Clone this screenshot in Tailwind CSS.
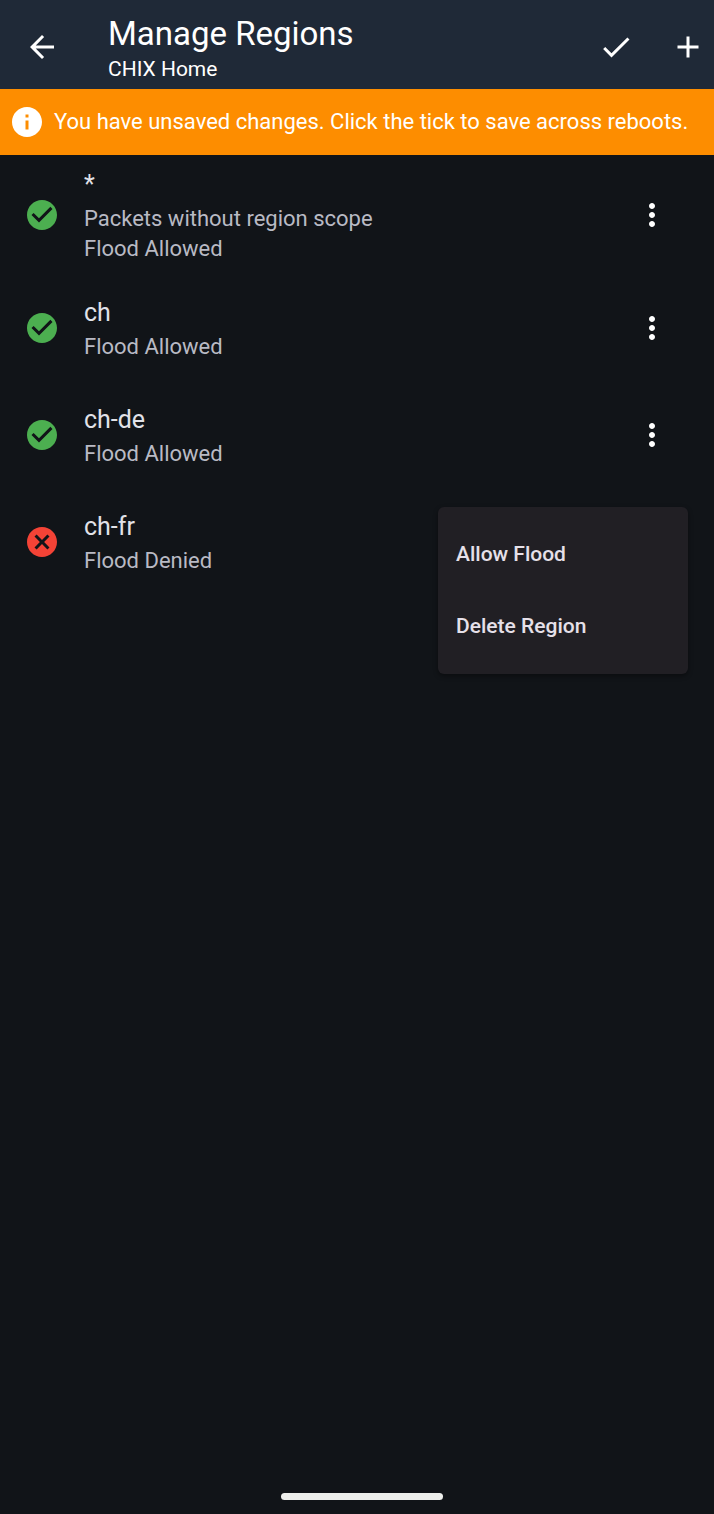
<!DOCTYPE html>
<html lang="en">
<head>
<meta charset="utf-8">
<meta name="viewport" content="width=device-width, initial-scale=1">
<title>Manage Regions</title>
<script src="https://cdn.jsdelivr.net/npm/@tailwindcss/browser@4"></script>
</head>
<body class="bg-[#111418] font-[Roboto,sans-serif] text-white">
<svg class="hidden" aria-hidden="true">
  <symbol id="ok" viewBox="0 0 24 24"><path d="M12 2C6.480 2 2 6.480 2 12s4.480 10 10 10 10-4.480 10-10S17.520 2 12 2zm-2 15l-5-5 1.410-1.410L10 14.170l7.590-7.590L19 8l-9 9z"/></symbol>
  <symbol id="more" viewBox="0 0 24 24"><path d="M12 8c1.100 0 2-.9 2-2s-.9-2-2-2-2 .9-2 2 .9 2 2 2zm0 2c-1.100 0-2 .9-2 2s.9 2 2 2 2-.9 2-2-.9-2-2-2zm0 6c-1.100 0-2 .9-2 2s.9 2 2 2 2-.9 2-2-.9-2-2-2z"/></symbol>
</svg>
<div class="flex min-h-screen flex-col">
  <header class="flex h-[89px] items-center bg-[#1f2937]">
    <button type="button" aria-label="Back" class="flex w-[84px] justify-center pt-1">
      <svg class="size-9" viewBox="0 0 24 24" fill="currentColor"><path d="M20 11H7.830l5.590-5.590L12 4l-8 8 8 8 1.410-1.410L7.830 13H20v-2z"/></svg>
    </button>
    <div class="flex-1 pt-[6px] pl-6">
      <h1 class="text-[33px] leading-[42px]">Manage Regions</h1>
      <p class="text-[21px] leading-[28px]">CHIX Home</p>
    </div>
    <button type="button" aria-label="Save" class="flex w-[72px] justify-center pt-1">
      <svg class="size-9" viewBox="0 0 24 24" fill="currentColor"><path d="M9 16.170L4.830 12l-1.420 1.410L9 19 21 7l-1.410-1.410z"/></svg>
    </button>
    <button type="button" aria-label="Add region" class="flex w-[62px] justify-end pr-2 pt-1">
      <svg class="size-9" viewBox="0 0 24 24" fill="currentColor"><path d="M19 13h-6v6h-2v-6H5v-2h6V5h2v6h6v2z"/></svg>
    </button>
  </header>
  <div role="status" class="flex min-h-[66px] items-center gap-[9px] bg-[#fd8d00] pl-[9px]">
    <svg class="size-9 shrink-0" viewBox="0 0 24 24" fill="currentColor"><path d="M12 2C6.480 2 2 6.480 2 12s4.480 10 10 10 10-4.480 10-10S17.520 2 12 2zm1 15h-2v-6h2v6zm0-8h-2V7h2v2z"/></svg>
    <p class="text-[22px] leading-[30px]">You have unsaved changes. Click the tick to save across reboots.</p>
  </div>
  <main class="flex-1">
    <ul>
      <li class="flex h-[119px] items-center pr-[26px] pl-6">
        <svg class="size-9 shrink-0 text-[#4caf50]" fill="currentColor" role="img" aria-label="Allowed"><use href="#ok"/></svg>
        <div class="flex-1 pt-[2px] pl-6">
          <h2 class="mb-px text-[25px] leading-[36px] text-[#e1e2e8]">*</h2>
          <p class="text-[22px] leading-[30px] text-[#b9bac4]">Packets without region scope<br>Flood Allowed</p>
        </div>
        <button type="button" aria-label="Options for *" class="flex size-[72px] items-center justify-center"><svg class="size-9" fill="currentColor"><use href="#more"/></svg></button>
      </li>
      <li class="flex h-[107px] items-center pr-[26px] pl-6">
        <svg class="size-9 shrink-0 text-[#4caf50]" fill="currentColor" role="img" aria-label="Allowed"><use href="#ok"/></svg>
        <div class="flex-1 pt-[2px] pl-6">
          <h2 class="mb-px text-[25px] leading-[36px] text-[#e1e2e8]">ch</h2>
          <p class="text-[22px] leading-[30px] text-[#b9bac4]">Flood Allowed</p>
        </div>
        <button type="button" aria-label="Options for ch" class="flex size-[72px] items-center justify-center"><svg class="size-9" fill="currentColor"><use href="#more"/></svg></button>
      </li>
      <li class="flex h-[107px] items-center pr-[26px] pl-6">
        <svg class="size-9 shrink-0 text-[#4caf50]" fill="currentColor" role="img" aria-label="Allowed"><use href="#ok"/></svg>
        <div class="flex-1 pt-[2px] pl-6">
          <h2 class="mb-px text-[25px] leading-[36px] text-[#e1e2e8]">ch-de</h2>
          <p class="text-[22px] leading-[30px] text-[#b9bac4]">Flood Allowed</p>
        </div>
        <button type="button" aria-label="Options for ch-de" class="flex size-[72px] items-center justify-center"><svg class="size-9" fill="currentColor"><use href="#more"/></svg></button>
      </li>
      <li class="relative flex h-[107px] items-center pr-[26px] pl-6">
        <svg class="size-9 shrink-0 text-[#f44336]" viewBox="0 0 24 24" fill="currentColor" role="img" aria-label="Denied"><path d="M12 2C6.470 2 2 6.470 2 12s4.470 10 10 10 10-4.470 10-10S17.530 2 12 2zm5 13.590L15.590 17 12 13.410 8.410 17 7 15.590 10.590 12 7 8.410 8.410 7 12 10.590 15.590 7 17 8.410 13.410 12 17 15.590z"/></svg>
        <div class="flex-1 pt-[2px] pl-6">
          <h2 class="mb-px text-[25px] leading-[36px] text-[#e1e2e8]">ch-fr</h2>
          <p class="text-[22px] leading-[30px] text-[#b9bac4]">Flood Denied</p>
        </div>
        <div role="menu" class="absolute top-[19px] right-[26px] flex w-[250px] flex-col rounded-md bg-[#211f24] pt-3 pb-[11px] text-[21px] font-medium text-[#e6e0e9] shadow-[0_2px_5px_rgba(0,0,0,0.4)]">
          <button type="button" role="menuitem" class="h-[72px] px-[18px] text-left">Allow Flood</button>
          <button type="button" role="menuitem" class="h-[72px] px-[18px] text-left">Delete Region</button>
        </div>
      </li>
    </ul>
  </main>
  <footer class="flex justify-center pb-[14px] pl-[10px]"><div class="h-[7px] w-[162px] rounded-full bg-[#eeefec]"></div></footer>
</div>
</body>
</html>
